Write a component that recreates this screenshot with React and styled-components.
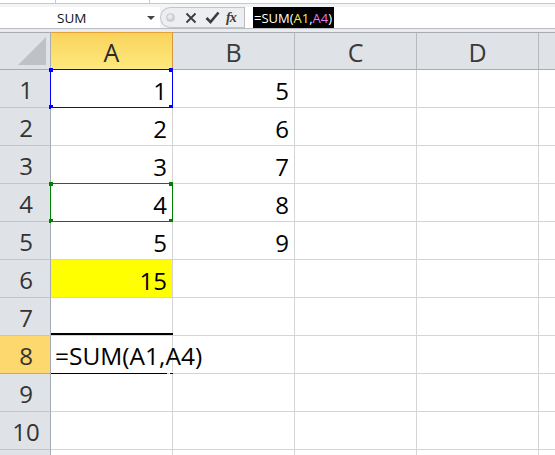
import React from "react";
import styled, { createGlobalStyle } from "styled-components";

const GlobalStyle = createGlobalStyle`
  html, body {
    margin: 0;
    padding: 0;
    background: #fff;
  }
  * {
    box-sizing: border-box;
  }
`;

// the last column is E, cut at the window edge so its letter never shows
const COLS = ["A", "B", "C", "D", ""];

const CELLS = {
  A1: "1",
  A2: "2",
  A3: "3",
  A4: "4",
  A5: "5",
  A6: "15",
  B1: "5",
  B2: "6",
  B3: "7",
  B4: "8",
  B5: "9",
};

export default function App() {
  const rows = Array.from({ length: 11 }, (_, i) => i + 1);

  return (
    <Window>
      <GlobalStyle />
      <TopStrip>
        <StripLine style={{ left: 55 }} />
        <StripLine style={{ left: 149 }} />
      </TopStrip>

      <FormulaBar>
        <NameBox>
          <NameText>SUM</NameText>
          <DropArrow />
        </NameBox>
        <FxGroup>
          <Grip />
          <IconBtn>
            <svg width="12" height="12" viewBox="0 0 12 12">
              <path d="M1.5 1.5 L10.5 10.5 M10.5 1.5 L1.5 10.5" stroke="#3c3c3c" strokeWidth="1.8" fill="none" />
            </svg>
          </IconBtn>
          <IconBtn>
            <svg width="15" height="13" viewBox="0 0 15 13">
              <path d="M1.5 7 L5.5 11 L13.5 1.5" stroke="#3c3c3c" strokeWidth="2.6" fill="none" />
            </svg>
          </IconBtn>
          <FxText>fx</FxText>
        </FxGroup>
        <FormulaInput>
          <Highlight>
            =SUM(<Ref $color="#f2f24a">A1</Ref>,<Ref $color="#e678f0">A4</Ref>)
          </Highlight>
        </FormulaInput>
      </FormulaBar>

      <Band />

      <Sheet>
        <Corner>
          <CornerTriangle />
        </Corner>
        {COLS.map((c, i) => (
          <ColHead key={i} $active={c === "A"}>
            {c}
          </ColHead>
        ))}

        {rows.map((r) => (
          <React.Fragment key={r}>
            {/* row 11 sits below the fold, only its top line shows */}
            <RowHead $active={r === 8}>{r <= 10 ? r : ""}</RowHead>
            {COLS.map((c, i) => {
              const id = c + r;
              return (
                <Cell key={i} $fill={id === "A6" ? "#ffff00" : null}>
                  {c && CELLS[id]}
                  {id === "A1" && <RefBox $color="#0000ff" />}
                  {id === "A4" && <RefBox $color="#008000" />}
                  {id === "A8" && (
                    <>
                      <EditText>=SUM(A1,A4)</EditText>
                      <EditTop />
                      <EditBottom />
                      <FillHandle />
                    </>
                  )}
                </Cell>
              );
            })}
          </React.Fragment>
        ))}
      </Sheet>
    </Window>
  );
}

const Window = styled.div`
  width: 555px;
  height: 455px;
  overflow: hidden;
  background: #fff;
  font-family: "Open Sans", "Liberation Sans", sans-serif;
`;

const TopStrip = styled.div`
  position: relative;
  height: 4px;
  background: #fff;
  border-bottom: 1px solid #c6c9cd;
`;

const StripLine = styled.div`
  position: absolute;
  top: 0;
  width: 1px;
  height: 3px;
  background: #c6c9cd;
`;

const FormulaBar = styled.div`
  display: flex;
  height: 25px;
  padding-top: 3px;
  background: #f3f4f6;
  border-bottom: 1px solid #b9bdc2;
`;

const NameBox = styled.div`
  position: relative;
  width: 160px;
  height: 21px;
  background: #fff;
  display: flex;
  align-items: center;
`;

const NameText = styled.span`
  margin-left: 57px;
  font-size: 13.5px;
  color: #111;
`;

const DropArrow = styled.span`
  position: absolute;
  left: 147px;
  top: 9px;
  width: 0;
  height: 0;
  border-left: 4px solid transparent;
  border-right: 4px solid transparent;
  border-top: 4px solid #444;
`;

const FxGroup = styled.div`
  display: flex;
  align-items: center;
  width: 84px;
  height: 21px;
  background: #eceef1;
  border: 1px solid #c2c6cb;
  border-right: none;
  border-radius: 11px 0 0 11px;
`;

const Grip = styled.span`
  width: 9px;
  height: 9px;
  margin-left: 5px;
  margin-right: 7px;
  border-radius: 50%;
  background: radial-gradient(circle at 40% 35%, #f4f4f4, #b9bcc0);
  border: 1px solid #c5c8cc;
`;

const IconBtn = styled.span`
  display: flex;
  align-items: center;
  justify-content: center;
  width: 18px;
  height: 19px;
  margin-right: 3px;
`;

const FxText = styled.span`
  margin-left: 2px;
  font-family: "Liberation Serif", serif;
  font-style: italic;
  font-weight: bold;
  font-size: 14px;
  color: #3c3c3c;
  letter-spacing: -1px;
`;

const FormulaInput = styled.div`
  flex: 1;
  height: 21px;
  background: #fff;
  border-left: 1px solid #b9bdc2;
  padding-left: 8px;
  display: flex;
`;

const Highlight = styled.span`
  height: 21px;
  display: flex;
  align-items: center;
  padding: 0 2px 0 1px;
  background: #000;
  color: #fff;
  font-size: 13px;
  white-space: pre;
`;

const Ref = styled.span`
  color: ${(p) => p.$color};
`;

const Band = styled.div`
  height: 3px;
  background: #e9ebee;
`;

const Sheet = styled.div`
  display: grid;
  grid-template-columns: 51px repeat(5, 122px);
  grid-auto-rows: 38px;
  width: 661px;
`;

const Corner = styled.div`
  position: relative;
  background: #dfe2e6;
  border-top: 1px solid #a8acb1;
  border-bottom: 1px solid #a8acb1;
  border-right: 1px solid #a8acb1;
`;

const CornerTriangle = styled.span`
  position: absolute;
  right: 4px;
  bottom: 4px;
  width: 0;
  height: 0;
  border-left: 28px solid transparent;
  border-bottom: 28px solid #bec2c7;
`;

const ColHead = styled.div`
  display: flex;
  align-items: center;
  justify-content: center;
  padding-top: 1px;
  font-size: 25px;
  color: ${(p) => (p.$active ? "#2a2a2a" : "#3a3a3a")};
  background: ${(p) =>
    p.$active ? "linear-gradient(#f9d35c, #fee97d)" : "#dfe2e6"};
  border-top: 1px solid ${(p) => (p.$active ? "#e4a238" : "#a8acb1")};
  border-bottom: 1px solid ${(p) => (p.$active ? "#d89a3c" : "#a8acb1")};
  border-right: 1px solid ${(p) => (p.$active ? "#d89a3c" : "#b6babf")};
  ${(p) => p.$active && "margin-left: -1px; border-left: 1px solid #d89a3c;"}
`;

const RowHead = styled.div`
  display: flex;
  align-items: center;
  justify-content: center;
  padding-top: 2px;
  padding-left: 2px;
  font-size: 24px;
  color: #333;
  background: ${(p) => (p.$active ? "#fcd86e" : "#dfe2e6")};
  border-right: 1px solid #a8acb1;
  border-bottom: 1px solid ${(p) => (p.$active ? "#e0a640" : "#c2c6cb")};
`;

const Cell = styled.div`
  position: relative;
  display: flex;
  align-items: center;
  justify-content: flex-end;
  padding: 3px 5px 0 0;
  font-size: 24px;
  color: #000;
  background: ${(p) => p.$fill || "#fff"};
  border-right: 1px solid #d4d4d4;
  border-bottom: 1px solid #d4d4d4;
`;

const RefBox = styled.span`
  position: absolute;
  left: -1px;
  top: -1px;
  right: -1px;
  bottom: -1px;
  border: 1px solid ${(p) => p.$color};
  pointer-events: none;

  &::before {
    content: "";
    position: absolute;
    width: 4px;
    height: 4px;
    background: ${(p) => p.$color};
    left: -2px;
    top: -2px;
    box-shadow: 120px 0 0 ${(p) => p.$color}, 0 37px 0 ${(p) => p.$color},
      120px 37px 0 ${(p) => p.$color};
  }
`;

const EditText = styled.span`
  position: absolute;
  left: 4px;
  top: 3px;
  white-space: nowrap;
  font-size: 24.5px;
  color: #000;
  z-index: 2;
`;

const EditTop = styled.span`
  position: absolute;
  left: 0;
  right: -1px;
  top: -3px;
  height: 2px;
  background: #000;
`;

const EditBottom = styled.span`
  position: absolute;
  left: 0;
  right: 5px;
  bottom: -2px;
  height: 2px;
  background: #000;
`;

const FillHandle = styled.span`
  position: absolute;
  right: -2px;
  bottom: -3px;
  width: 5px;
  height: 4px;
  background: #000;
  border: 1px solid #fff;
  border-bottom: none;
`;
